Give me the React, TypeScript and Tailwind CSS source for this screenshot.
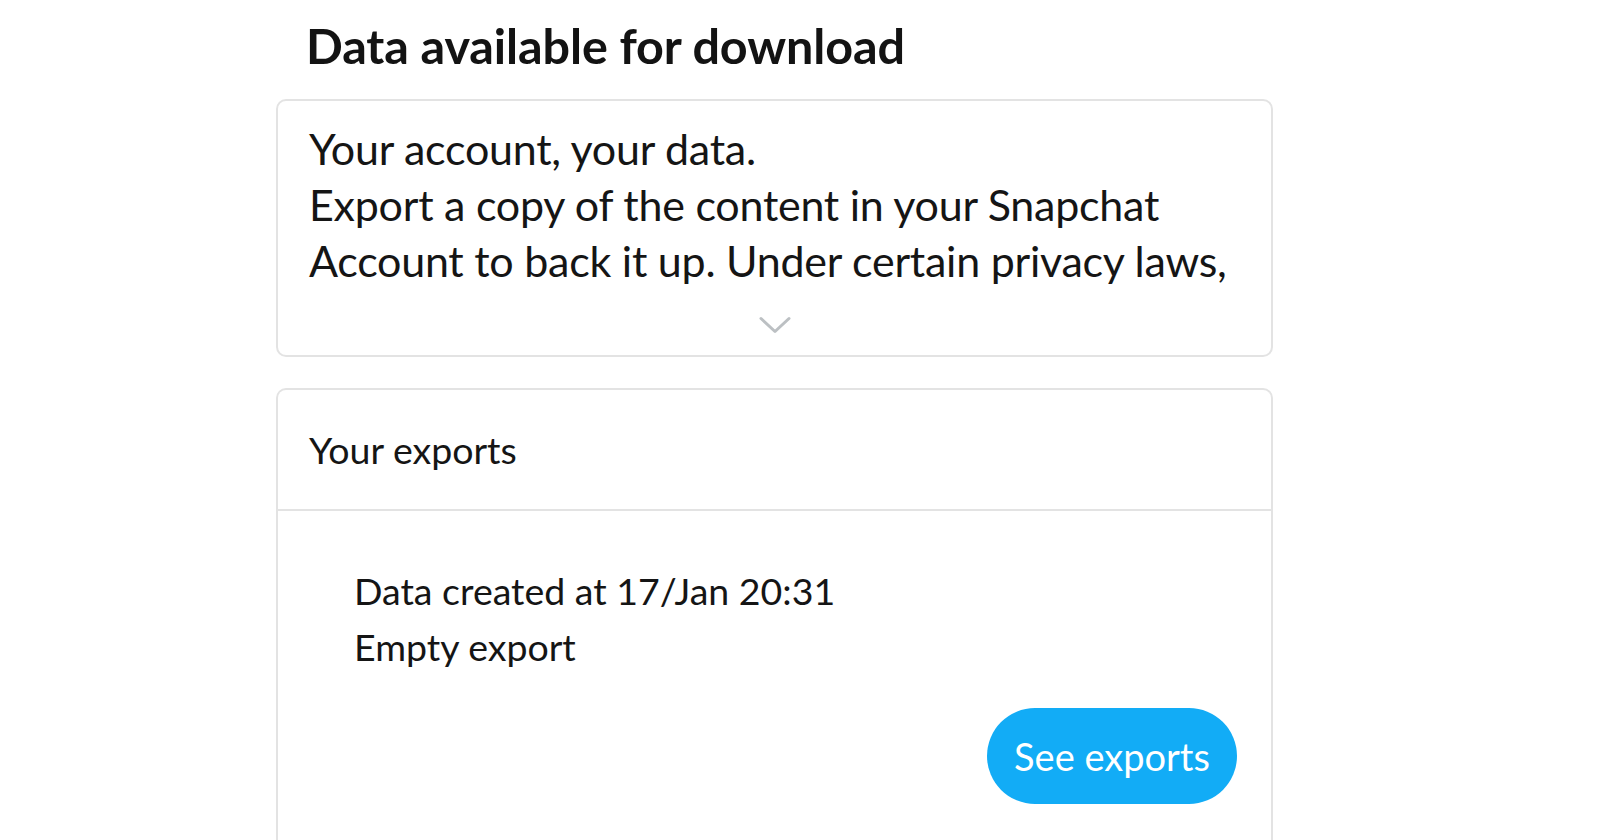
const lines = [
  "Your account, your data.",
  "Export a copy of the content in your Snapchat",
  "Account to back it up. Under certain privacy laws,",
]

const Chevron = () => (
  <svg width="32" height="18" viewBox="0 0 32 18" fill="none">
    <path
      d="M2 2.5 L16 15.5 L30 2.5"
      stroke="#bcc0c3"
      strokeWidth="3"
      strokeLinecap="round"
      strokeLinejoin="round"
    />
  </svg>
)

export default function App() {
  return (
    <div
      className="h-[840px] w-[1600px] overflow-hidden bg-white text-[#151515]"
      style={{ fontFamily: "Lato, 'Noto Sans', sans-serif" }}
    >
      <div className="ml-[276px] w-[997px]">
        <h1 className="pl-[30px] pt-[15px] text-[48.5px] font-bold leading-[60px] tracking-[-0.1px] text-[#131313]">
          Data available for download
        </h1>

        <div className="mt-[24px] rounded-[10px] border-2 border-[#e3e3e3] px-[31px] pt-[20px] pb-[21px]">
          <div className="text-[43px] leading-[56px] tracking-[-0.25px]">
            {lines.map((l, i) => (
              <div key={i} className="whitespace-nowrap">
                {l}
              </div>
            ))}
          </div>
          <div className="mt-[27px] flex justify-center">
            <Chevron />
          </div>
        </div>

        <div className="mt-[31px] h-[500px] rounded-t-[10px] border-2 border-b-0 border-[#e3e3e3]">
          <div className="flex h-[121px] items-center border-b-2 border-[#e3e3e3] pl-[31px] pt-[1px]">
            <span className="text-[37.5px] leading-[56px]">Your exports</span>
          </div>
          <div className="pl-[76px] pr-[34px] pt-[52px]">
            <div className="text-[37.5px] leading-[56px]">
              <div>Data created at 17/Jan 20:31</div>
              <div>Empty export</div>
            </div>
            <div className="mt-[33px] flex justify-end">
              <button className="flex h-[96px] w-[250px] items-center justify-center rounded-full bg-[#12acf6] text-[38px] text-white">
                See exports
              </button>
            </div>
          </div>
        </div>
      </div>
    </div>
  )
}
